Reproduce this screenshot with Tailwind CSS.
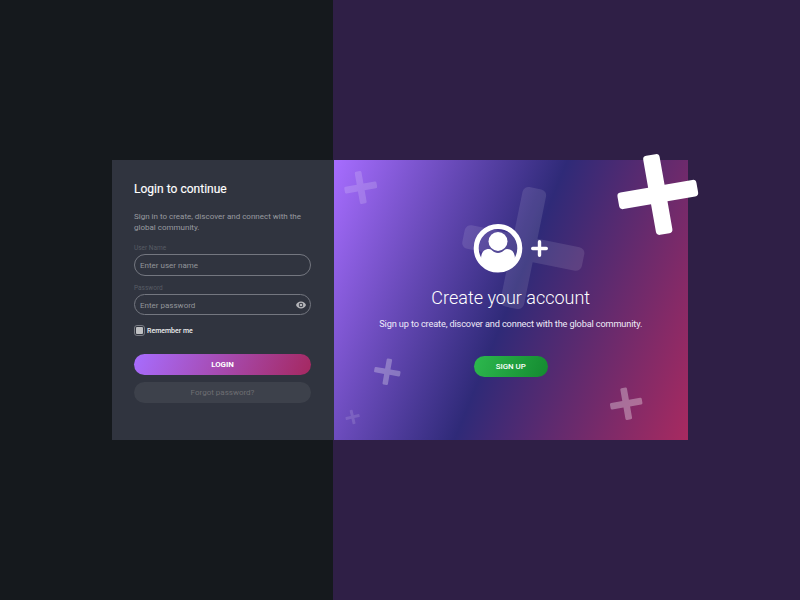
<!DOCTYPE html>
<html lang="en">
<head>
<meta charset="utf-8">
<title>Login</title>
<script src="https://cdn.jsdelivr.net/npm/@tailwindcss/browser@4"></script>
</head>
<body class="w-[800px] h-[600px] overflow-hidden font-['Roboto',sans-serif]">
<svg class="hidden">
  <symbol id="plus" viewBox="-50 -50 100 100" overflow="visible">
    <path d="M-10.300-10.300V-45a4.500 4.500 0 0 1 4.500-4.500H5.800a4.500 4.500 0 0 1 4.500 4.500V-10.300H45a4.500 4.500 0 0 1 4.500 4.500V5.800a4.500 4.500 0 0 1-4.500 4.500H10.300V45a4.500 4.500 0 0 1-4.500 4.500H-5.800a4.500 4.500 0 0 1-4.500-4.500V10.300H-45a4.500 4.500 0 0 1-4.500-4.500V-5.800a4.500 4.500 0 0 1 4.500-4.500Z"/>
  </symbol>
</svg>
<div class="w-[800px] h-[600px] flex items-start pl-[112px] pt-[160px] bg-[linear-gradient(90deg,#15191d_333px,#2f1f46_333px)]">
  <main class="relative w-[576px] h-[280px] flex">
    <section class="w-[221.500px] shrink-0 bg-[#30343f] pl-[22px] pr-[22.500px] pt-[21px] flex flex-col">
      <h1 class="text-[12px] leading-[17px] font-normal text-white tracking-[0.020px] [-webkit-text-stroke:0.15px_white]">Login to continue</h1>
      <p class="mt-[13px] text-[8px] leading-[11px] text-[#999ba0] whitespace-nowrap">Sign in to create, discover and connect with the<br>global community.</p>
      <label class="mt-[11px] text-[6.500px] leading-[8px] text-[#575b64]">User Name</label>
      <div class="mt-[2px] h-[22px] rounded-full border-[1.500px] border-[#747780] pl-[5px] pt-[2px] flex items-center text-[8px] text-[#92949a]">Enter user name</div>
      <label class="mt-[8px] text-[6.500px] leading-[8px] text-[#575b64]">Password</label>
      <div class="mt-[2px] h-[21px] rounded-full border-[1.500px] border-[#747780] pl-[5px] pr-[4px] flex items-center justify-between text-[8px] text-[#92949a]"><span class="pt-[2px]">Enter password</span>
        <svg class="w-[10px] h-[8px]" viewBox="0 0 22 16"><path fill="#b4b5b9" fill-rule="evenodd" d="M11 .5C6 .5 1.700 3.600 0 8c1.700 4.400 6 7.500 11 7.500S20.300 12.400 22 8C20.300 3.600 16 .5 11 .5Zm0 12.500a5 5 0 1 1 0-10 5 5 0 0 1 0 10Zm0-8a3 3 0 1 0 0 6 3 3 0 0 0 0-6Z"/></svg>
      </div>
      <div class="mt-[10px] flex items-center h-[11px] gap-[2px]">
        <span class="w-[11px] h-[11px] rounded-[3px] border border-[#777a82] flex items-center justify-center"><span class="w-[7px] h-[7px] rounded-[1px] bg-[#bfc0c3]"></span></span>
        <span class="text-[7px] leading-[11px] pt-[2px] font-medium text-[#eeeeef]">Remember me</span>
      </div>
      <button class="mt-[17.500px] h-[21px] rounded-full bg-[linear-gradient(112deg,#a76dff,#a52860)] pt-[1px] text-[7.900px] font-bold text-white">LOGIN</button>
      <button class="mt-[7.500px] h-[21px] rounded-full bg-[#3d414b] text-[8px] text-[#6d6e72]">Forgot password?</button>
    </section>
    <section class="relative w-[354.500px] h-[280px] overflow-hidden bg-[linear-gradient(112deg,#a76dff_0%,#2f2a78_50%,#a82a60_100%)] flex flex-col items-center pt-[63px] text-white">
      <svg class="absolute inset-0 w-[354.500px] h-[280px]" viewBox="334 160 354.500 280" fill="white">
        <use href="#plus" x="-16.500" y="-16.500" width="33" height="33" transform="translate(360.700 187.500) rotate(-10)" opacity=".16"/>
        <g transform="translate(523.300 248) rotate(11.500)" opacity=".11"><path d="M-12-12V-55a6 6 0 0 1 6-6H6a6 6 0 0 1 6 6V-12H55a6 6 0 0 1 6 6V6a6 6 0 0 1-6 6H12V55a6 6 0 0 1-6 6H-6a6 6 0 0 1-6-6V12H-55a6 6 0 0 1-6-6V-6a6 6 0 0 1 6-6Z"/></g>
        <use href="#plus" x="-13.300" y="-13.300" width="26.600" height="26.600" transform="translate(387.300 371.700) rotate(10)" opacity=".28"/>
        <use href="#plus" x="-7.200" y="-7.200" width="14.400" height="14.400" transform="translate(352.600 417) rotate(-13)" opacity=".13"/>
        <use href="#plus" x="-16.300" y="-16.300" width="32.600" height="32.600" transform="translate(626.200 403.700) rotate(-10)" opacity=".33"/>
      </svg>
      <div class="relative flex items-center gap-[8px] mr-[1px]">
        <svg class="w-[50px] h-[50px]" viewBox="0 0 50 50"><circle cx="25" cy="25.300" r="21.800" fill="none" stroke="white" stroke-width="5"/><circle cx="25" cy="18.400" r="9.500" fill="white"/><path fill="white" d="M8 36c0-6.500 3-10 8-10 3 0 4 3.900 9 3.900s6-3.900 9-3.900c5 0 8 3.500 8 10C38 43 32 47 25 47S12 43 8 36Z"/></svg>
        <svg class="w-[17px] h-[17px]" viewBox="0 0 17 17" stroke="white" stroke-width="3.400" stroke-linecap="round"><path d="M8.500 1.700V15.300M1.700 8.500H15.300"/></svg>
      </div>
      <h2 class="relative mt-[13px] text-[18px] leading-[24px] font-light">Create your account</h2>
      <p class="relative mt-[8px] text-[9.200px] leading-[12px] tracking-[-0.140px] whitespace-nowrap text-[#efeaf8]">Sign up to create, discover and connect with the global community.</p>
      <button class="relative mt-[26px] w-[74px] h-[21px] rounded-full bg-[linear-gradient(112deg,#2db84e,#148a30)] text-[7.900px] font-medium">SIGN UP</button>
    </section>
    <svg class="absolute left-[496px] top-[-16px] w-[100px] h-[100px] overflow-visible" viewBox="-50 -50 100 100" fill="white"><use href="#plus" x="-40.500" y="-40.500" width="81" height="81" transform="translate(-.2 .5) rotate(-10)"/></svg>
  </main>
</div>
</body>
</html>
